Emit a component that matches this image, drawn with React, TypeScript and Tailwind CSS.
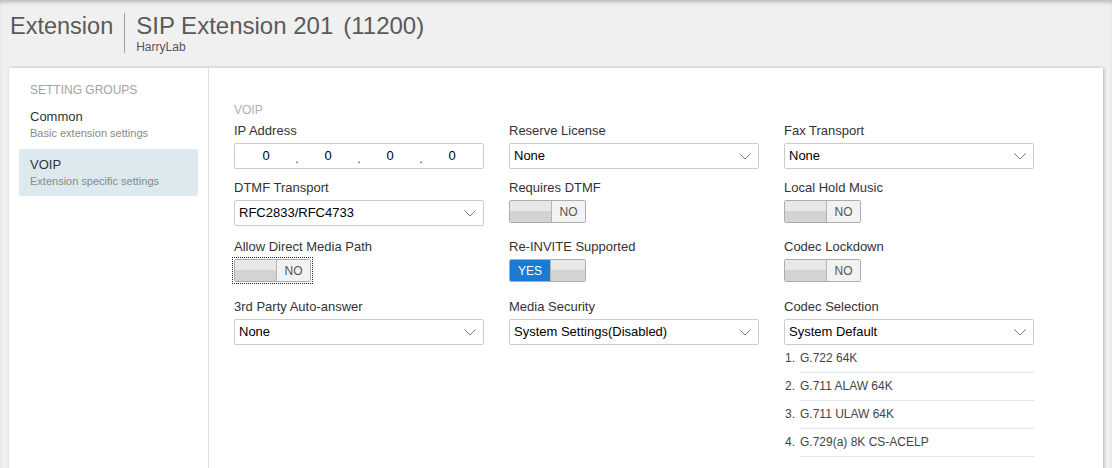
import React from "react";

const Chevron = () => (
  <svg width="12" height="7" viewBox="0 0 12 7" fill="none">
    <polyline points="0.5,0.5 6,6 11.5,0.5" stroke="#7a7a7a" strokeWidth="1" />
  </svg>
);

const Label = ({ children }: { children: React.ReactNode }) => (
  <div className="h-[16px] leading-[16px] text-[13px] text-[#333] mb-[4px] whitespace-nowrap">{children}</div>
);

const Select = ({ value }: { value: string }) => (
  <div className="flex items-center justify-between h-[26px] w-[250px] border border-[#cccccc] rounded-[2px] bg-white pl-[4px] pr-[7px] text-[13px] text-black">
    <span>{value}</span>
    <Chevron />
  </div>
);

const Toggle = ({ on = false, focused = false }: { on?: boolean; focused?: boolean }) => (
  <div className={focused ? "w-[77px] outline-1 outline-dotted outline-[#222] outline-offset-1" : "w-[77px]"}>
    <div className="flex h-[23px] w-[77px] border border-[#adadad] rounded-[2px] overflow-hidden text-[12px]">
      {on ? (
        <>
          <div className="w-[40px] bg-[#1b7bd3] text-white flex items-center justify-center">YES</div>
          <div className="flex-1 border-l border-[#b5b5b5] bg-[linear-gradient(to_bottom,#e8e8e8_50%,#d3d3d3_50%)]" />
        </>
      ) : (
        <>
          <div className="w-[41px] bg-[linear-gradient(to_bottom,#e8e8e8_50%,#d3d3d3_50%)]" />
          <div className="flex-1 border-l border-[#b5b5b5] bg-[#f2f2f2] text-[#555] flex items-center justify-center">NO</div>
        </>
      )}
    </div>
  </div>
);

const IpInput = () => (
  <div className="flex items-center h-[26px] w-[250px] border border-[#cccccc] rounded-[2px] bg-white text-[13px] text-black">
    {[0, 1, 2, 3].map((i) => (
      <React.Fragment key={i}>
        {i > 0 && <span className="w-[4px] -mx-[2px] text-center self-end pb-[2px] leading-[14px] text-[#333]">.</span>}
        <span className="flex-1 text-center">0</span>
      </React.Fragment>
    ))}
  </div>
);

const codecs = ["G.722 64K", "G.711 ALAW 64K", "G.711 ULAW 64K", "G.729(a) 8K CS-ACELP"];

export default function App() {
  return (
    <div className="w-[1112px] h-[468px] overflow-hidden bg-[#f0f0f0] shadow-[inset_0_4px_4px_-2px_rgba(0,0,0,0.25)] font-['Liberation_Sans',Arial,sans-serif]">
      <div className="flex items-start h-[68px] pt-[12px] pl-[10px] text-[#5a5a5a]">
        <div className="text-[23.5px] leading-[28px]">Extension</div>
        <div className="w-px h-[40px] mt-[1px] ml-[11px] bg-[#a0a0a0]" />
        <div className="ml-[11px]">
          <div className="text-[24px] leading-[28px] whitespace-nowrap">
            SIP Extension 201<span className="ml-[10px]">(11200)</span>
          </div>
          <div className="text-[12px] leading-[14px] text-[#555]">HarryLab</div>
        </div>
      </div>

      <div className="flex ml-[9px] w-[1094px] h-[420px] bg-white shadow-[1px_0_3px_rgba(0,0,0,0.25)]">
        <div className="w-[200px] border-r border-[#e2e2e2] pt-[15px]">
          <div className="px-[21px] text-[12px] leading-[14px] text-[#a3a3a3] mb-[4px]">SETTING GROUPS</div>
          <div className="mx-[10px] h-[47px] px-[11px] pt-[8px] mb-[1px] rounded-[2px]">
            <div className="text-[13px] leading-[16px] text-[#333]">Common</div>
            <div className="text-[11px] leading-[13px] mt-[2px] text-[#888]">Basic extension settings</div>
          </div>
          <div className="mx-[10px] h-[47px] px-[11px] pt-[8px] rounded-[2px] bg-[#dce9ef]">
            <div className="text-[13px] leading-[16px] text-[#333]">VOIP</div>
            <div className="text-[11px] leading-[13px] mt-[2px] text-[#888]">Extension specific settings</div>
          </div>
        </div>

        <div className="flex-1 pl-[25px] pt-[35px]">
          <div className="text-[12px] leading-[14px] text-[#b0b0b0]">VOIP</div>

          <div className="grid grid-cols-[250px_250px_250px] gap-x-[25px] mt-[6px]">
            <div>
              <Label>IP Address</Label>
              <IpInput />
            </div>
            <div>
              <Label>Reserve License</Label>
              <Select value="None" />
            </div>
            <div>
              <Label>Fax Transport</Label>
              <Select value="None" />
            </div>
          </div>

          <div className="grid grid-cols-[250px_250px_250px] gap-x-[25px] mt-[11px]">
            <div>
              <Label>DTMF Transport</Label>
              <Select value="RFC2833/RFC4733" />
            </div>
            <div>
              <Label>Requires DTMF</Label>
              <Toggle />
            </div>
            <div>
              <Label>Local Hold Music</Label>
              <Toggle />
            </div>
          </div>

          <div className="grid grid-cols-[250px_250px_250px] gap-x-[25px] mt-[13px]">
            <div>
              <Label>Allow Direct Media Path</Label>
              <Toggle focused />
            </div>
            <div>
              <Label>Re-INVITE Supported</Label>
              <Toggle on />
            </div>
            <div>
              <Label>Codec Lockdown</Label>
              <Toggle />
            </div>
          </div>

          <div className="grid grid-cols-[250px_250px_250px] gap-x-[25px] mt-[17px]">
            <div>
              <Label>3rd Party Auto-answer</Label>
              <Select value="None" />
            </div>
            <div>
              <Label>Media Security</Label>
              <Select value="System Settings(Disabled)" />
            </div>
            <div>
              <Label>Codec Selection</Label>
              <Select value="System Default" />
              <ul className="text-[12px] text-[#444]">
                {codecs.map((c, i) => (
                  <li key={c} className="flex">
                    <span className="w-[16px] pl-[1px] leading-[27px]">{i + 1}.</span>
                    <span className="flex-1 leading-[27px] border-b border-[#dfe7ee]">{c}</span>
                  </li>
                ))}
              </ul>
            </div>
          </div>
        </div>
      </div>
    </div>
  );
}
